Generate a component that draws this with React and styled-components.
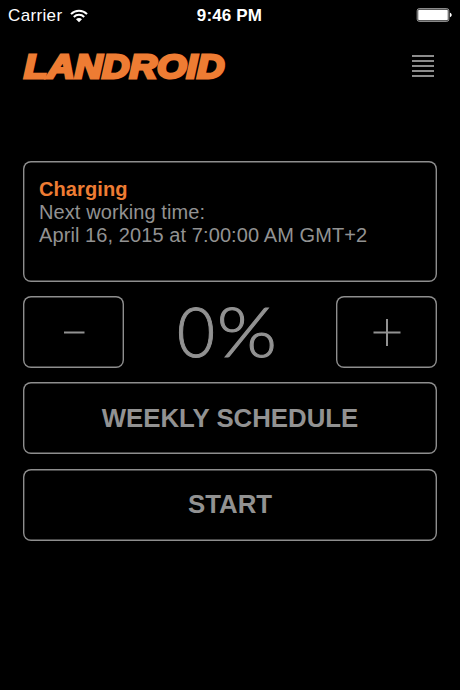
import React, { useState } from 'react';
import styled, { createGlobalStyle } from 'styled-components';

const GlobalStyle = createGlobalStyle`
  * {
    box-sizing: border-box;
  }

  body {
    margin: 0;
    background: #000;
    font-family: "Liberation Sans", Arial, sans-serif;
  }
`;

const Screen = styled.div`
  width: 460px;
  height: 690px;
  background: #000;
  color: #929292;
  overflow: hidden;
`;

const StatusBar = styled.div`
  display: grid;
  grid-template-columns: 1fr auto 1fr;
  align-items: center;
  height: 30px;
  padding: 0 8px;
  color: #fff;
  font-size: 17px;
`;

const Carrier = styled.div`
  display: flex;
  align-items: center;
  gap: 8px;
  padding-top: 1px;
  letter-spacing: 0.35px;
`;

const Clock = styled.div`
  padding: 1px 1px 0 0;
  font-size: 17px;
  font-weight: 700;
  letter-spacing: 0.15px;
`;

const BatteryIcon = styled.svg`
  justify-self: end;
`;

const Header = styled.header`
  display: flex;
  justify-content: space-between;
  height: 131px;
  padding: 12px 26px 0 20px;
`;

const Logo = styled.svg`
  overflow: visible;
  font-family: "Liberation Sans", Arial, sans-serif;
  font-size: 34px;
  font-weight: 700;
  font-style: italic;
`;

const MenuButton = styled.button`
  display: flex;
  flex-direction: column;
  gap: 3px;
  width: 22px;
  height: 24px;
  margin-top: 13px;
  padding: 0;
  border: none;
  background: none;
  cursor: pointer;
`;

const MenuLine = styled.span`
  width: 22px;
  height: 2px;
  background: #8c8c8c;
`;

const Content = styled.main`
  display: flex;
  flex-direction: column;
  gap: 14.18px;
  padding: 0 23px;
`;

const StatusCard = styled.section`
  height: 121px;
  padding: 17px 16px;
  border-radius: 8px;
  box-shadow: inset 0 0 0 1.4px #8e8e8e;
  font-size: 20px;
  letter-spacing: 0.09px;
  line-height: 23px;
`;

const StatusTitle = styled.div`
  color: #ee7c33;
  font-weight: 700;
`;

const StatusLine = styled.div`
  white-space: nowrap;
`;

const RainRow = styled.div`
  display: grid;
  grid-template-columns: 101px 1fr 101px;
  height: 72px;
`;

const Button = styled.button`
  display: flex;
  align-items: center;
  justify-content: center;
  width: 100%;
  height: 72px;
  padding: 0;
  border: none;
  border-radius: 8px;
  box-shadow: inset 0 0 0 1.4px #8e8e8e;
  background: none;
  color: #929292;
  font-family: inherit;
  font-size: 25.8px;
  font-weight: 700;
  cursor: pointer;
`;

const Percent = styled.div`
  display: flex;
  justify-content: center;
  gap: 3px;
  height: 72px;
  padding-right: 9px;
  color: #929292;
  font-family: Lato, sans-serif;
  font-size: 69px;
  font-weight: 300;
  line-height: 69px;
  -webkit-text-stroke: 1px #929292;
`;

const PercentValue = styled.span`
  transform: scaleX(0.95);
  transform-origin: left;
`;

const PercentSign = styled.span`
  transform: scaleX(1.12);
`;

const App = () => {
  const [percent, setPercent] = useState(0);

  const changePercent = (step) => {
    setPercent(prev => Math.min(100, Math.max(0, prev + step)));
  };

  return (
    <Screen>
      <GlobalStyle />
      <StatusBar>
        <Carrier>
          Carrier
          <svg width="18" height="14" viewBox="0 0 18 14" fill="none" stroke="#fff">
            <path d="M1 5.1a11.3 11.3 0 0 1 16 0" strokeWidth="2" />
            <path d="M3.8 8a7.3 7.3 0 0 1 10.4 0" strokeWidth="2" />
            <path d="M9 13.2 6 10.3a4.2 4.2 0 0 1 6 0z" fill="#fff" stroke="none" />
          </svg>
        </Carrier>
        <Clock>9:46 PM</Clock>
        <BatteryIcon width="36" height="14" viewBox="0 0 36 14">
          <rect x="1.2" y="0.7" width="31.6" height="12.6" rx="2" fill="none" stroke="#aaa" strokeWidth="1" />
          <rect x="2.2" y="1.7" width="29.6" height="10.6" rx="1" fill="#fff" />
          <path d="M33.9 4.8c2.4.7 2.4 3.7 0 4.4z" fill="#fff" />
        </BatteryIcon>
      </StatusBar>

      <Header>
        <Logo width="210" height="50" viewBox="0 0 210 50">
          <text
            x="4"
            y="35.5"
            textLength="200.5"
            lengthAdjust="spacingAndGlyphs"
            fill="#ee7c33"
            stroke="#ee7c33"
            strokeWidth="2.9"
          >
            LANDROID
          </text>
        </Logo>
        <MenuButton aria-label="Menu">
          {[0, 1, 2, 3, 4].map(line => (
            <MenuLine key={line} />
          ))}
        </MenuButton>
      </Header>

      <Content>
        <StatusCard>
          <StatusTitle>Charging</StatusTitle>
          <StatusLine>Next working time:</StatusLine>
          <StatusLine>April 16, 2015 at 7:00:00 AM GMT+2</StatusLine>
        </StatusCard>
        <RainRow>
          <Button aria-label="Decrease" onClick={() => changePercent(-10)}>
            <svg width="28" height="28" viewBox="0 0 28 28" stroke="#929292" strokeWidth="2">
              <path d="M4 14.5h20.5" />
            </svg>
          </Button>
          <Percent>
            <PercentValue>{percent}</PercentValue>
            <PercentSign>%</PercentSign>
          </Percent>
          <Button aria-label="Increase" onClick={() => changePercent(10)}>
            <svg width="28" height="28" viewBox="0 0 28 28" stroke="#929292" strokeWidth="2">
              <path d="M.5 14.5h27M14 1v27" />
            </svg>
          </Button>
        </RainRow>
        <Button>WEEKLY SCHEDULE</Button>
        <Button>START</Button>
      </Content>
    </Screen>
  );
};

export default App;
